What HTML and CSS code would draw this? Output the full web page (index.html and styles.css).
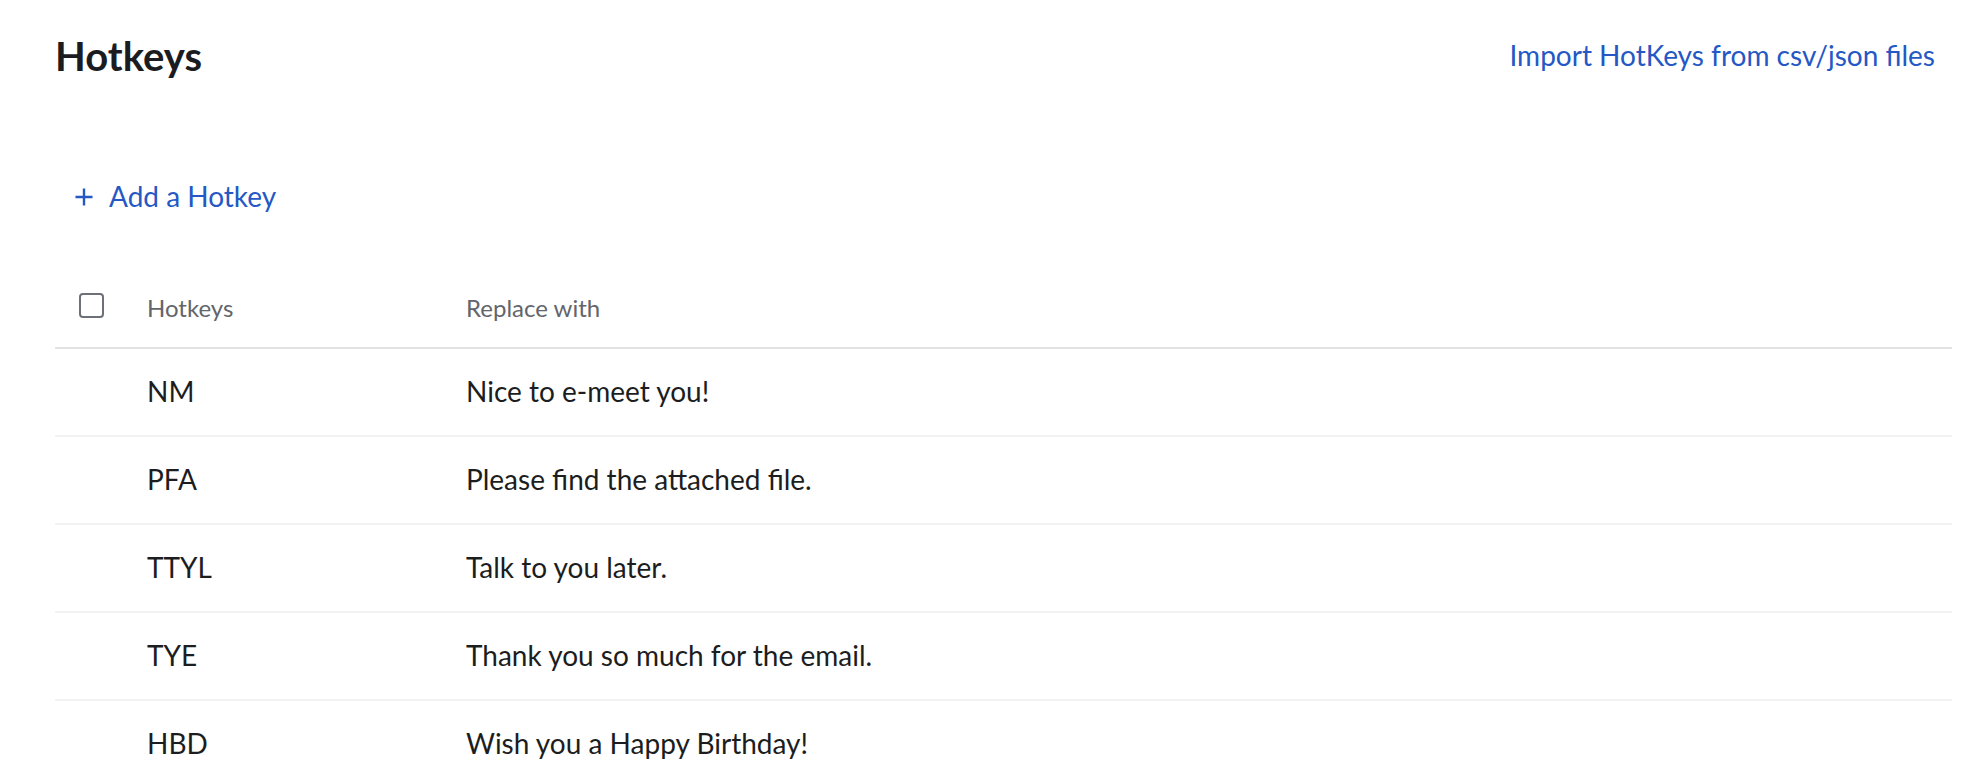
FILE: index.html
```html
<!DOCTYPE html>
<html lang="en">
<head>
<meta charset="utf-8">
<title>Hotkeys</title>
<link rel="stylesheet" href="styles.css">
</head>
<body>
<div class="page">
  <header class="topbar">
    <h1 class="title">Hotkeys</h1>
    <a class="import-link" href="#">Import HotKeys from csv/json files</a>
  </header>

  <button class="add-btn" type="button">
    <svg class="plus" width="18" height="18" viewBox="0 0 18 18" aria-hidden="true">
      <path d="M9 0.5V17.5M0.5 9H17.5" stroke="currentColor" stroke-width="2.4" fill="none"/>
    </svg>
    <span>Add a Hotkey</span>
  </button>

  <div class="table">
    <div class="row head">
      <div class="cell check"><span class="checkbox"></span></div>
      <div class="cell label">Hotkeys</div>
      <div class="cell label">Replace with</div>
    </div>
    <div class="row">
      <div class="cell check"></div>
      <div class="cell">NM</div>
      <div class="cell">Nice to e-meet you!</div>
    </div>
    <div class="row">
      <div class="cell check"></div>
      <div class="cell">PFA</div>
      <div class="cell">Please find the attached file.</div>
    </div>
    <div class="row">
      <div class="cell check"></div>
      <div class="cell">TTYL</div>
      <div class="cell">Talk to you later.</div>
    </div>
    <div class="row">
      <div class="cell check"></div>
      <div class="cell">TYE</div>
      <div class="cell">Thank you so much for the email.</div>
    </div>
    <div class="row">
      <div class="cell check"></div>
      <div class="cell">HBD</div>
      <div class="cell">Wish you a Happy Birthday!</div>
    </div>
  </div>
</div>
</body>
</html>
```

FILE: styles.css
```css
* { box-sizing: border-box; }

html, body {
  margin: 0;
  padding: 0;
  background: #ffffff;
}

body {
  font-family: Lato, "Open Sans", "Liberation Sans", sans-serif;
  color: #1c1d20;
}

.page {
  padding: 32px 16px 0 55px;
}

.topbar {
  display: flex;
  justify-content: space-between;
  align-items: flex-start;
}

.title {
  margin: 0;
  font-size: 40px;
  line-height: 1.2;
  font-weight: 700;
  color: #1b1c1f;
}

.import-link {
  margin-top: 7px;
  margin-right: 17px;
  font-size: 28px;
  line-height: 1.2;
  color: #2558c4;
  text-decoration: none;
}

.add-btn {
  display: flex;
  align-items: center;
  gap: 16px;
  margin-top: 100px;
  margin-left: 20px;
  padding: 0;
  border: 0;
  background: none;
  font-family: inherit;
  font-size: 28px;
  line-height: 1.2;
  color: #2558c4;
  cursor: pointer;
}

.plus {
  display: block;
  margin-top: 1px;
}

.table {
  margin-top: 50px;
}

.row {
  display: grid;
  grid-template-columns: 92px 319px 1fr;
  align-items: center;
  height: 88px;
  border-bottom: 2px solid #f3f3f4;
  font-size: 28px;
  line-height: 1.2;
  color: #1c1d20;
}

.row.head {
  height: 85px;
  border-bottom: 2px solid #e2e2e4;
  font-size: 24px;
  color: #62656b;
}

.row.head .label {
  padding-top: 6px;
}

.cell.check {
  padding-left: 24px;
}

.checkbox {
  display: block;
  width: 25px;
  height: 25px;
  border: 2px solid #6d7077;
  border-radius: 4px;
}
```
